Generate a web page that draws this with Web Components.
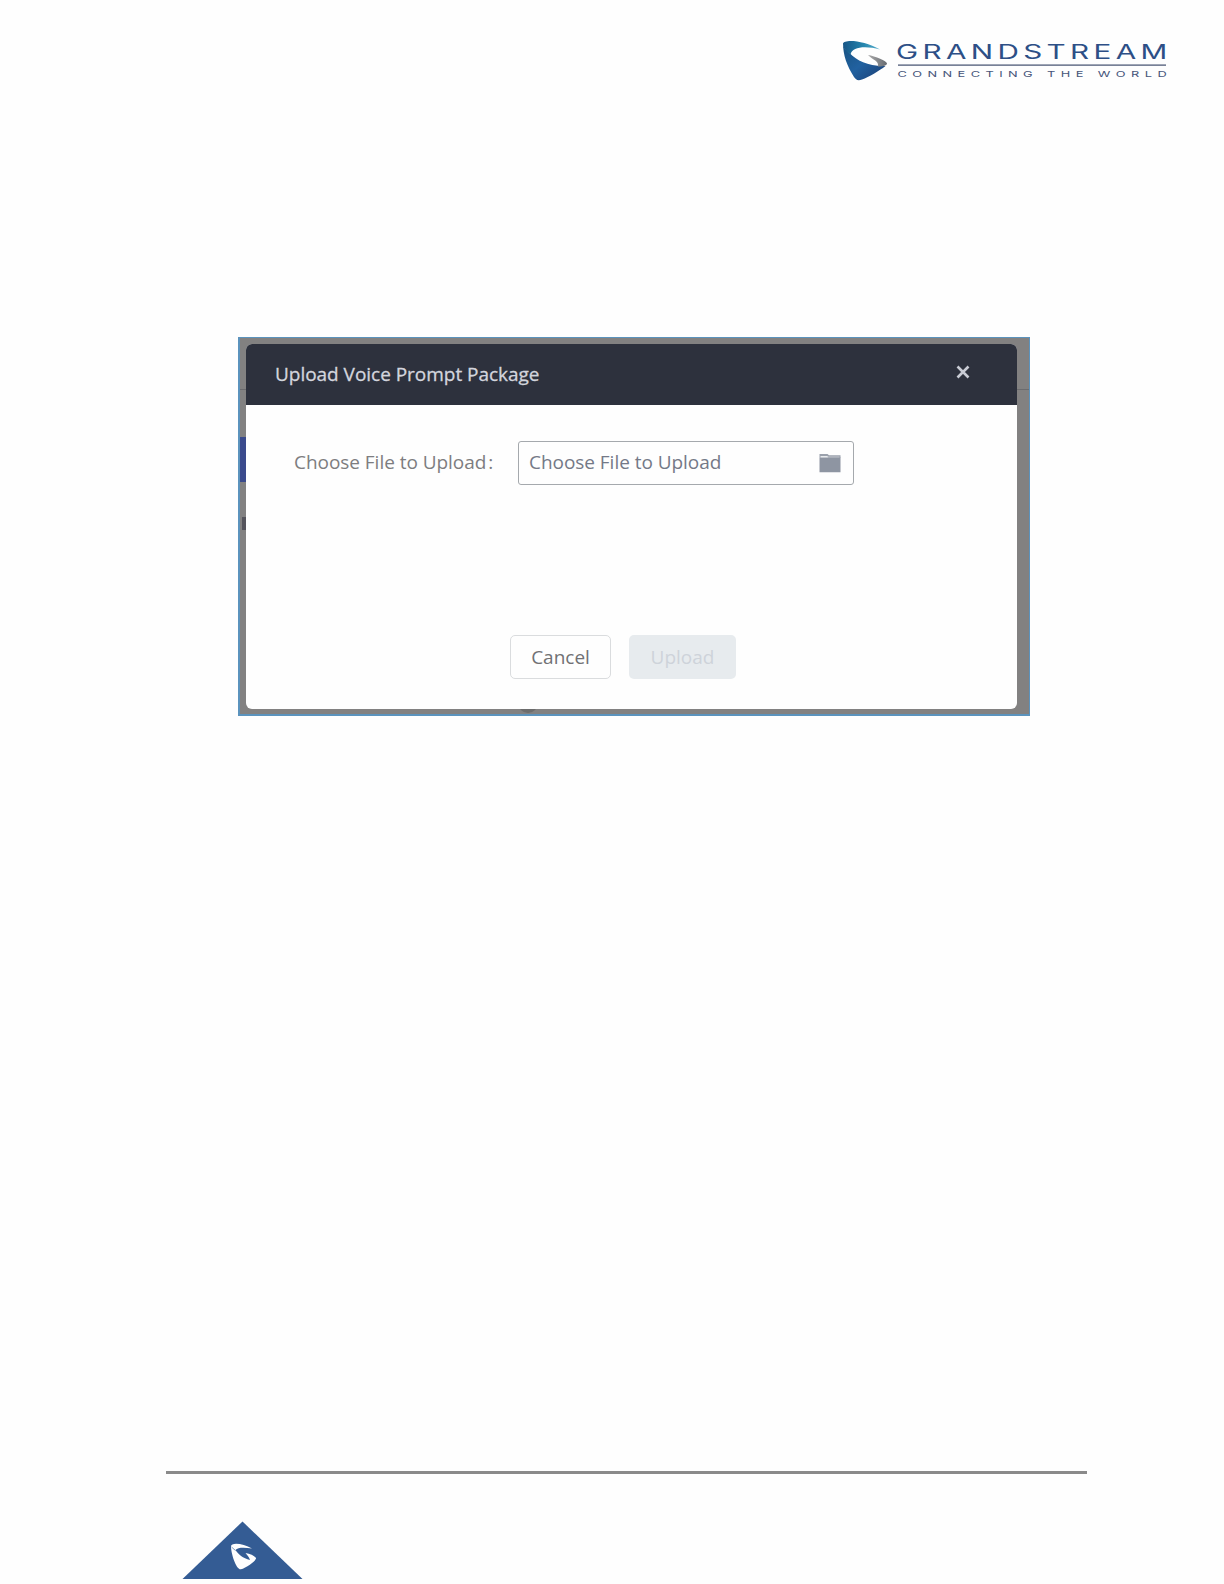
<!DOCTYPE html>
<html lang="en">
<head>
<meta charset="utf-8">
<title>Upload Voice Prompt Package</title>
<style>
    html, body {
        margin: 0;
        background: #fefefe;
    }
    body {
        font-family: "Open Sans", "Noto Sans", sans-serif;
    }
</style>
</head>
<body>
<manual-page>
    <brand-logo slot="header"></brand-logo>
    <screen-frame>
        <upload-dialog heading="Upload Voice Prompt Package">
            <form-row label="Choose File to Upload">
                <file-input>Choose File to Upload</file-input>
            </form-row>
            <dialog-button slot="actions">Cancel</dialog-button>
            <dialog-button slot="actions" disabled>Upload</dialog-button>
        </upload-dialog>
    </screen-frame>
    <page-corner slot="footer"></page-corner>
</manual-page>

<script>
class ManualPage extends HTMLElement {

    constructor() {
        super();
        this.shadowDOM = this.attachShadow({mode: "open"});
        this.shadowDOM.innerHTML = `
            <style>
                :host{
                    box-sizing: border-box;
                    display: flex;
                    flex-direction: column;
                    width: 1224px;
                    height: 1584px;
                    overflow: hidden;
                }
                header{
                    display: flex;
                    justify-content: flex-end;
                    padding: 36px 52px 0 0;
                    height: 301px;
                }
                main{
                    flex: 1;
                    padding-left: 238px;
                }
                footer{
                    height: 110px;
                    margin: 0 137px 3px 166px;
                    border-top: 3px solid #8a8a8a;
                    box-sizing: border-box;
                    display: flex;
                    align-items: flex-end;
                    padding: 0 0 2px 16px;
                }
            </style>
            <header><slot name="header"></slot></header>
            <main><slot></slot></main>
            <footer><slot name="footer"></slot></footer>
        `;
    }

}

class BrandLogo extends HTMLElement {

    constructor() {
        super();
        this.shadowDOM = this.attachShadow({mode: "open"});
        this.shadowDOM.innerHTML = `
            <style>
                :host{
                    display: block;
                    width: 332px;
                    height: 48px;
                }
                svg{
                    display: block;
                }
                text{
                    font-family: "Inter", sans-serif;
                    fill: #2d4f86;
                }
                .tagline{
                    fill: #46557a;
                }
            </style>
            <svg width="332" height="48" viewBox="840 36 332 48">
                <defs>
                    <linearGradient id="top" x1="0" y1="0" x2="1" y2="0">
                        <stop offset="0" stop-color="#175586"/>
                        <stop offset=".55" stop-color="#2585ad"/>
                        <stop offset="1" stop-color="#5ab0ce"/>
                    </linearGradient>
                    <linearGradient id="body" x1="0" y1="0" x2="1" y2="1">
                        <stop offset="0" stop-color="#17517f"/>
                        <stop offset=".5" stop-color="#2161a0"/>
                        <stop offset="1" stop-color="#1c3d72"/>
                    </linearGradient>
                    <linearGradient id="tip" x1="0" y1="0" x2="1" y2="0">
                        <stop offset="0" stop-color="#aaa"/>
                        <stop offset="1" stop-color="#666a70"/>
                    </linearGradient>
                </defs>
                <path fill="url(#body)" d="M843 43 C843 47 846 50.500 850 53.500 C857 60.500 868 66.500 885.500 66 C879 71 869 77 862 79.500 C858 81 856 80 854 77 C847 66 843 55 843 43Z"/>
                <path fill="url(#top)" d="M843 43.500 C844 39 864 40 880 49.500 C866 45.500 852 46.500 850.500 54.500 C846 51.500 843 48 843 43.500Z"/>
                <path fill="url(#tip)" d="M868 55 C875 56 887 61 887 63.500 C887 65 885 66.500 878 66.500 C879 61 873 60 868 55Z"/>
                <g transform="translate(896 59.200) scale(1.520 1)">
                    <text font-size="19.500" textLength="178.500" lengthAdjust="spacing">GRANDSTREAM</text>
                </g>
                <rect x="898" y="64.500" width="268" height="1.200" fill="#3f4c6c"/>
                <g transform="translate(897.500 77) scale(1.600 1)">
                    <text class="tagline" font-size="8" textLength="168.200" lengthAdjust="spacing">CONNECTING THE WORLD</text>
                </g>
            </svg>
        `;
    }

}

class ScreenFrame extends HTMLElement {

    constructor() {
        super();
        this.shadowDOM = this.attachShadow({mode: "open"});
        this.shadowDOM.innerHTML = `
            <style>
                :host{
                    box-sizing: border-box;
                    position: relative;
                    display: block;
                    width: 792px;
                    height: 379px;
                    padding: 6px 11px 6px 6px;
                    border: 2px solid #5b93bd;
                    border-width: 1px 1px 2px 2px;
                    background-color: #828181;
                }
                i{
                    position: absolute;
                }
                /* page showing behind the mask */
                .rule{ left: 0; top: 51px; width: 100%; height: 1px; background: #6b6b6e; }
                .tab{ left: 0; top: 99px; width: 6px; height: 45px; background: #3a4a8c; }
                .mark{ left: 2px; top: 179px; width: 4px; height: 13px; background: #55545c; }
                .dot{ left: 278px; bottom: 1px; width: 20px; height: 10px; border-radius: 0 0 10px 10px; background: #6c6c6c; }
                slot{
                    position: relative;
                    display: block;
                }
            </style>
            <i class="rule"></i><i class="tab"></i><i class="mark"></i><i class="dot"></i>
            <slot></slot>
        `;
    }

}

class UploadDialog extends HTMLElement {

    constructor() {
        super();
        this.shadowDOM = this.attachShadow({mode: "open"});
    }

    connectedCallback() {
        this.render();
    }

    render() {
        this.shadowDOM.innerHTML = `
            <style>
                :host{
                    box-sizing: border-box;
                    display: flex;
                    flex-direction: column;
                    width: 771px;
                    height: 365px;
                    border-radius: 6px;
                    overflow: hidden;
                    background-color: #fefefe;
                }
                header{
                    box-sizing: border-box;
                    display: flex;
                    justify-content: space-between;
                    align-items: center;
                    height: 61px;
                    padding: 0 47px 0 29px;
                    background-color: #2d313d;
                    color: #d3d5dd;
                }
                h1{
                    margin: -1px 0 0;
                    font-size: 19px;
                    font-weight: 400;
                    line-height: 26px;
                    letter-spacing: -0.03px;
                    white-space: nowrap;
                    -webkit-text-stroke: 0.3px;
                }
                header svg{
                    margin-top: -5px;
                }
                .body{
                    flex: 1;
                    padding-top: 36px;
                }
                footer{
                    display: flex;
                    gap: 18px;
                    padding: 0 0 30px 264px;
                }
            </style>
            <header>
                <h1>${this.getAttribute("heading")}</h1>
                <svg width="14" height="14" viewBox="0 0 14 14"><path d="M1.500 1.500L12.500 12.500M12.500 1.500L1.500 12.500" stroke="#c9ccd5" stroke-width="2.600"/></svg>
            </header>
            <div class="body"><slot></slot></div>
            <footer><slot name="actions"></slot></footer>
        `;
    }

}

class FormRow extends HTMLElement {

    constructor() {
        super();
        this.shadowDOM = this.attachShadow({mode: "open"});
    }

    connectedCallback() {
        this.render();
    }

    render() {
        this.shadowDOM.innerHTML = `
            <style>
                :host{
                    display: flex;
                    align-items: center;
                    padding-left: 48px;
                }
                label{
                    width: 224px;
                    margin-top: -3px;
                    font-size: 19px;
                    line-height: 26px;
                    letter-spacing: -0.04px;
                    white-space: nowrap;
                    color: #7d7d80;
                }
                span{
                    margin-left: 2px;
                }
            </style>
            <label>${this.getAttribute("label")}<span>:</span></label>
            <slot></slot>
        `;
    }

}

class FileInput extends HTMLElement {

    constructor() {
        super();
        this.shadowDOM = this.attachShadow({mode: "open"});
        this.shadowDOM.innerHTML = `
            <style>
                :host{
                    box-sizing: border-box;
                    display: flex;
                    justify-content: space-between;
                    align-items: center;
                    width: 336px;
                    height: 44px;
                    padding: 0 12px 0 10px;
                    border: 1.5px solid #a5a9ad;
                    border-radius: 3px;
                    font-size: 19px;
                    line-height: 26px;
                    letter-spacing: -0.04px;
                    white-space: nowrap;
                    color: #747987;
                }
                .text{
                    margin-top: -3px;
                }
            </style>
            <span class="text"><slot></slot></span>
            <svg width="22" height="20" viewBox="0 0 22 20"><path fill="#9ba1ac" d="M0.500 1h8l1.500 1.200h11.500v2.800h-21z"/><path fill="#e9ebee" d="M1.500 3h6.500l1.500 .8h11v.8h-19z"/><path fill="#8e95a2" d="M0.500 5h8l1-.4h12v14.600h-21z"/></svg>
        `;
    }

}

class DialogButton extends HTMLElement {

    constructor() {
        super();
        this.shadowDOM = this.attachShadow({mode: "open"});
        this.shadowDOM.innerHTML = `
            <style>
                :host{
                    box-sizing: border-box;
                    display: flex;
                    justify-content: center;
                    width: 101px;
                    height: 44px;
                    padding-top: 8px;
                    border: 1.5px solid #dadcde;
                    border-radius: 5px;
                    font-size: 19px;
                    line-height: 26px;
                    color: #717174;
                }
                :host([disabled]){
                    width: 107px;
                    padding-top: 9px;
                    border: 0;
                    background-color: #e7ebee;
                    color: #ced3da;
                }
            </style>
            <slot></slot>
        `;
    }

}

class PageCorner extends HTMLElement {

    constructor() {
        super();
        this.shadowDOM = this.attachShadow({mode: "open"});
        this.shadowDOM.innerHTML = `
            <style>
                :host{
                    display: block;
                    height: 58px;
                }
                svg{
                    display: block;
                }
            </style>
            <svg width="121" height="58" viewBox="182 1521 121 58">
                <path fill="#345c94" d="M182.500 1579L242.500 1521.500L302.500 1579z"/>
                <path fill="#fefefe" d="M231 1546.500 C230.500 1542 243 1543 252 1548.500 C245 1547.500 238 1547 235.500 1550 C238 1554 243 1558.500 250 1560 C249 1556.500 247 1555 245.500 1553 C250 1553.500 254 1555.500 256 1558 C257 1560 246 1568 241 1569.300 C236 1570 231 1553 231 1546.500Z"/>
                <path fill="none" stroke="#345c94" stroke-width=".600" d="M231.500 1547L235.500 1550.500"/>
            </svg>
        `;
    }

}

customElements.define("manual-page", ManualPage);
customElements.define("brand-logo", BrandLogo);
customElements.define("screen-frame", ScreenFrame);
customElements.define("upload-dialog", UploadDialog);
customElements.define("form-row", FormRow);
customElements.define("file-input", FileInput);
customElements.define("dialog-button", DialogButton);
customElements.define("page-corner", PageCorner);
</script>
</body>
</html>
